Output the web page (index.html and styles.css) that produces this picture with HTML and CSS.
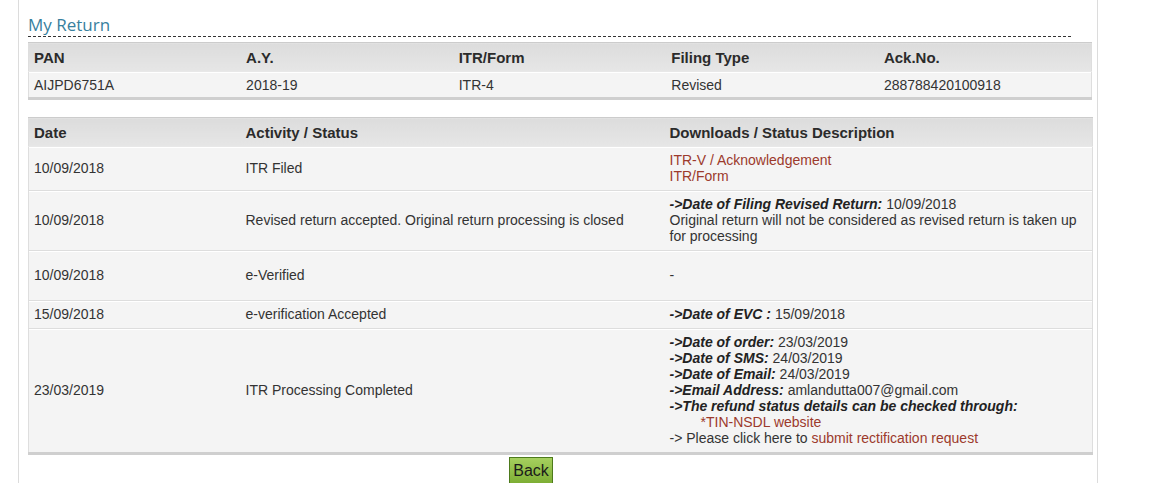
FILE: index.html
```html
<!DOCTYPE html>
<html>
<head>
<meta charset="utf-8">
<title>My Return</title>
<link rel="stylesheet" href="styles.css">
</head>
<body>
<div class="page">
  <h2 class="title">My Return</h2>
  <table class="grid summary">
    <colgroup><col class="c5"><col class="c5"><col class="c5"><col class="c5"><col class="c5"></colgroup>
    <thead>
      <tr><th>PAN</th><th>A.Y.</th><th>ITR/Form</th><th>Filing Type</th><th>Ack.No.</th></tr>
    </thead>
    <tbody>
      <tr class="r-single"><td>AIJPD6751A</td><td>2018-19</td><td>ITR-4</td><td>Revised</td><td>288788420100918</td></tr>
    </tbody>
  </table>

  <table class="grid history">
    <colgroup><col class="cdate"><col class="cact"><col class="cdesc"></colgroup>
    <thead>
      <tr><th>Date</th><th>Activity / Status</th><th>Downloads / Status Description</th></tr>
    </thead>
    <tbody>
      <tr>
        <td>10/09/2018</td>
        <td>ITR Filed</td>
        <td><a href="#">ITR-V / Acknowledgement</a><br><a href="#">ITR/Form</a></td>
      </tr>
      <tr>
        <td>10/09/2018</td>
        <td>Revised return accepted. Original return processing is closed</td>
        <td><b>-&gt;Date of Filing Revised Return:</b> 10/09/2018<br>Original return will not be considered as revised return is taken up for processing</td>
      </tr>
      <tr class="r-tall">
        <td>10/09/2018</td>
        <td>e-Verified</td>
        <td>-</td>
      </tr>
      <tr>
        <td>15/09/2018</td>
        <td>e-verification Accepted</td>
        <td><b>-&gt;Date of EVC :</b> 15/09/2018</td>
      </tr>
      <tr class="r-last">
        <td>23/03/2019</td>
        <td>ITR Processing Completed</td>
        <td>
          <b>-&gt;Date of order:</b> 23/03/2019<br>
          <b>-&gt;Date of SMS:</b> 24/03/2019<br>
          <b>-&gt;Date of Email:</b> 24/03/2019<br>
          <b>-&gt;Email Address:</b> amlandutta007@gmail.com<br>
          <b>-&gt;The refund status details can be checked through:</b><br>
          <span class="indent"><a href="#">*TIN-NSDL website</a></span><br>
          -&gt; Please click here to <a href="#">submit rectification request</a>
        </td>
      </tr>
    </tbody>
  </table>

  <div class="actions">
    <button class="btn-back" type="button">Back</button>
  </div>
</div>
</body>
</html>
```

FILE: styles.css
```css
html, body {
  margin: 0;
  padding: 0;
  background: #ffffff;
}

body {
  font-family: "Liberation Sans", Arial, sans-serif;
  color: #333333;
  font-size: 14px;
}

.page {
  margin-left: 18px;
  width: 1080px;
  border-left: 1px solid #dcdcdc;
  border-right: 1px solid #dcdcdc;
  padding: 14px 0 0 9px;
  box-sizing: border-box;
  height: 483px;
  overflow: hidden;
}

.title {
  margin: 0;
  width: 1043px;
  font-family: "Open Sans", "Liberation Sans", sans-serif;
  font-weight: 400;
  font-size: 17px;
  line-height: 22px;
  color: #37809e;
  border-bottom: 1px dashed #333333;
  padding-bottom: 0;
}

.grid {
  border-collapse: collapse;
  table-layout: fixed;
  width: 1064px;
  border-left: 1px solid #dedede;
  border-right: 1px solid #dedede;
  border-bottom: 3px solid #cfcfcf;
}

.summary {
  margin-top: 5px;
}

.history {
  margin-top: 17px;
}

.c5 { width: 212px; }
.cdate { width: 212px; }
.cact { width: 424px; }
.cdesc { width: 428px; }

.grid th {
  text-align: left;
  font-weight: bold;
  font-size: 15px;
  color: #2b2b2b;
  height: 28px;
  padding: 0 5px;
  background: linear-gradient(#dcdcdc, #e6e6e6);
  border-top: 1px solid #cccccc;
  border-bottom: 1px solid #e8e8e8;
}

.grid td {
  background: #f4f4f4;
  padding: 5px 5px 6px;
  line-height: 16px;
  vertical-align: middle;
  border-top: 1px solid #dddddd;
  box-shadow: inset 0 1px 0 #ffffff;
}

.grid tbody tr:first-child td {
  border-top: 1px solid #ffffff;
}

.r-single td {
  padding-top: 5px;
  padding-bottom: 4px;
}

.r-tall td {
  height: 38px;
}

.grid b {
  font-style: italic;
  color: #222222;
}

.grid a {
  color: #9c3a2c;
  text-decoration: none;
}

.indent {
  padding-left: 31px;
}

.actions {
  padding-left: 481px;
  padding-top: 2px;
}

.btn-back {
  font-family: "Liberation Sans", Arial, sans-serif;
  font-size: 16px;
  color: #1a1a1a;
  height: 28px;
  width: 44px;
  padding: 0;
  border: 1px solid #4d7a1c;
  background: linear-gradient(#a6d05f, #7cad33);
}
```
